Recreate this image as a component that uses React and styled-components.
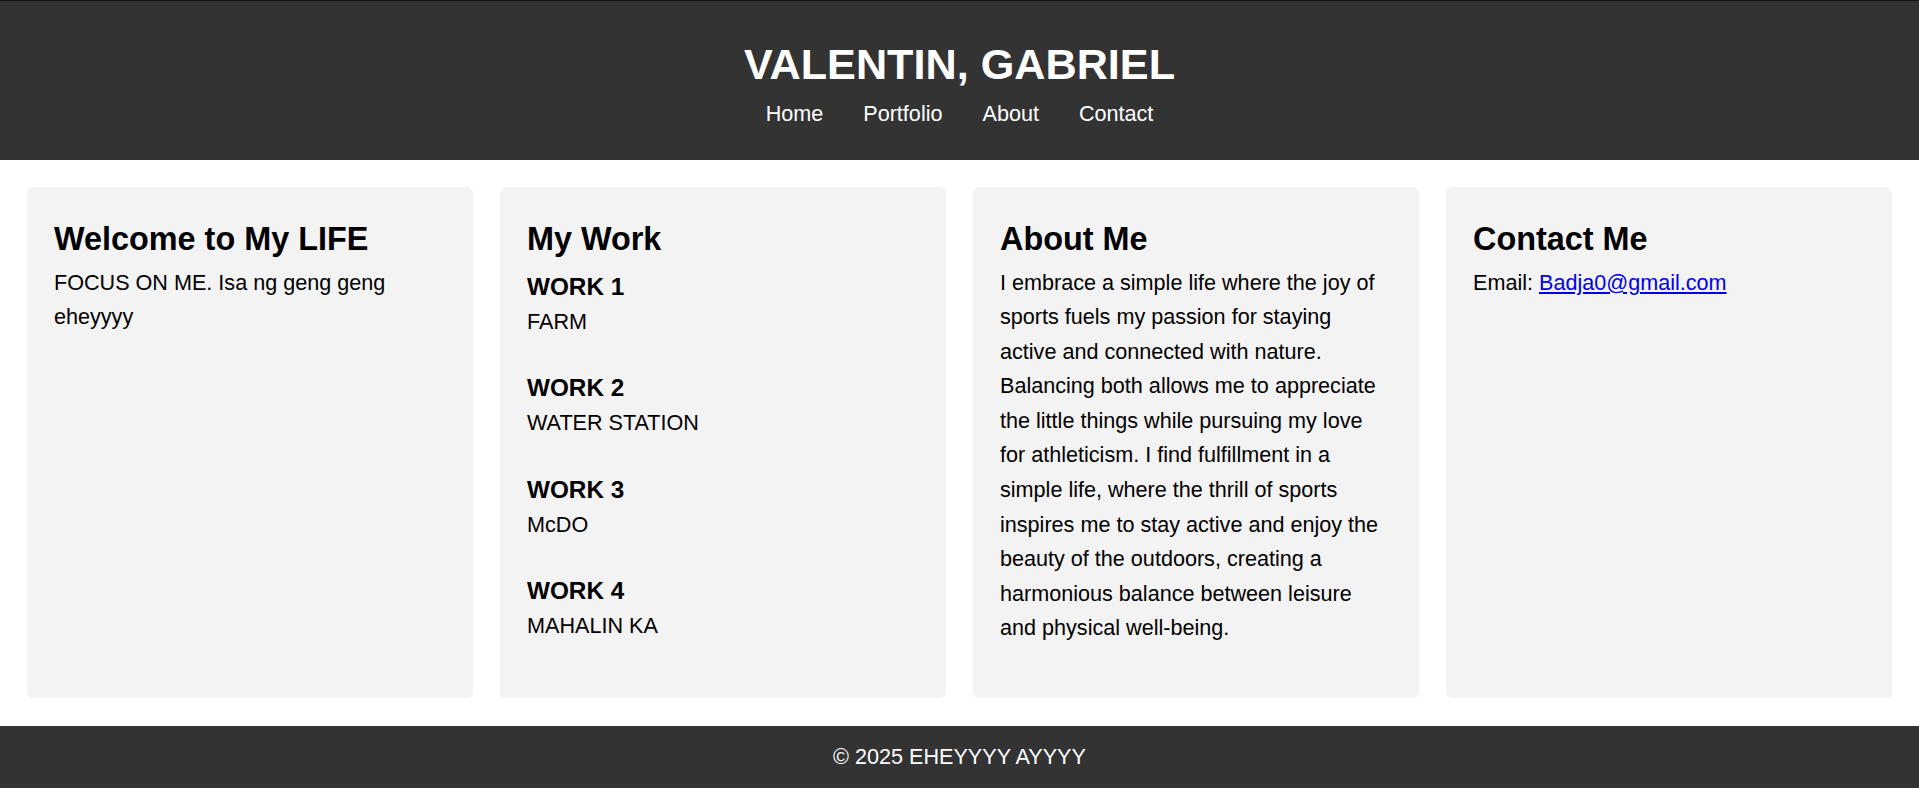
import React from "react";
import styled, { createGlobalStyle } from "styled-components";

const GlobalStyle = createGlobalStyle`
  html, body {
    margin: 0;
    padding: 0;
    background: #ffffff;
  }
  body {
    font-family: "Liberation Sans", Arial, sans-serif;
    font-size: 21.6px;
    line-height: 1.6;
    color: #000000;
  }
  * { box-sizing: border-box; }
`;

const Header = styled.header`
  background: #333333;
  color: #ffffff;
  border-top: 1px solid #141414;
  padding: 31px 0 28px;
  text-align: center;
`;

const Title = styled.h1`
  margin: 0;
  font-size: 43.2px;
  line-height: 65px;
  font-weight: 700;
`;

const Nav = styled.nav`
  display: flex;
  justify-content: center;
  line-height: 34.56px;
`;

const NavLink = styled.a`
  color: #ffffff;
  text-decoration: none;
  margin: 0 20px;
`;

const Main = styled.main`
  display: flex;
  align-items: stretch;
  gap: 27px;
  padding: 27px 27px 28px;
`;

const Card = styled.section`
  flex: 1 1 0;
  min-width: 0;
  background: #f3f3f3;
  border-radius: 6px;
  padding: 25px 37px 26px 27px;
`;

const CardTitle = styled.h2`
  margin: 0;
  font-size: 32.4px;
  line-height: 54px;
  font-weight: 700;
`;

const Text = styled.p`
  margin: 0;
  line-height: 34.56px;
`;

const WorkItem = styled.div`
  padding-top: 2px;
  margin-bottom: 28px;
`;

const WorkTitle = styled.h3`
  margin: 0;
  font-size: 24.3px;
  line-height: 37px;
  font-weight: 700;
`;

const MailLink = styled.a`
  color: #0000ee;
  text-decoration: underline;
`;

const Footer = styled.footer`
  background: #333333;
  color: #ffffff;
  text-align: center;
  padding: 14px 0;
  line-height: 34.56px;
`;

const works = [
  { title: "WORK 1", desc: "FARM" },
  { title: "WORK 2", desc: "WATER STATION" },
  { title: "WORK 3", desc: "McDO" },
  { title: "WORK 4", desc: "MAHALIN KA" },
];

export default function App() {
  return (
    <>
      <GlobalStyle />
      <Header>
        <Title>VALENTIN, GABRIEL</Title>
        <Nav>
          <NavLink href="#home">Home</NavLink>
          <NavLink href="#portfolio">Portfolio</NavLink>
          <NavLink href="#about">About</NavLink>
          <NavLink href="#contact">Contact</NavLink>
        </Nav>
      </Header>
      <Main>
        <Card id="home">
          <CardTitle>Welcome to My LIFE</CardTitle>
          <Text>FOCUS ON ME. Isa ng geng geng eheyyyy</Text>
        </Card>
        <Card id="portfolio">
          <CardTitle>My Work</CardTitle>
          {works.map((w) => (
            <WorkItem key={w.title}>
              <WorkTitle>{w.title}</WorkTitle>
              <Text>{w.desc}</Text>
            </WorkItem>
          ))}
        </Card>
        <Card id="about">
          <CardTitle>About Me</CardTitle>
          <Text>
            I embrace a simple life where the joy of sports fuels my passion for
            staying active and connected with nature. Balancing both allows me to
            appreciate the little things while pursuing my love for athleticism. I
            find fulfillment in a simple life, where the thrill of sports inspires
            me to stay active and enjoy the beauty of the outdoors, creating a
            harmonious balance between leisure and physical well-being.
          </Text>
        </Card>
        <Card id="contact">
          <CardTitle>Contact Me</CardTitle>
          <Text>
            Email: <MailLink href="mailto:Badja0@gmail.com">Badja0@gmail.com</MailLink>
          </Text>
        </Card>
      </Main>
      <Footer>© 2025 EHEYYYY AYYYY</Footer>
    </>
  );
}
